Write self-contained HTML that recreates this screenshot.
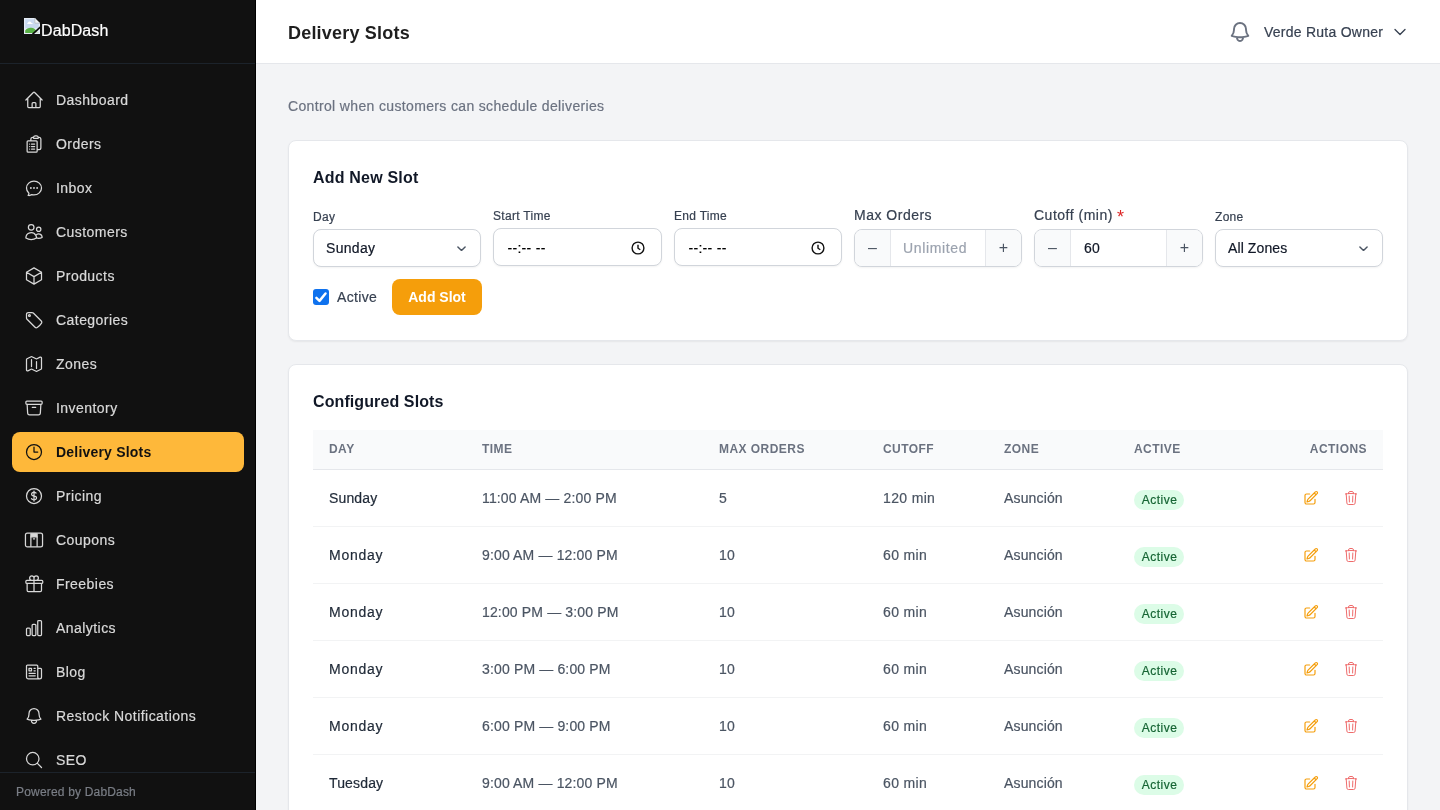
<!DOCTYPE html>
<html><head><meta charset="utf-8">
<style>
*{box-sizing:border-box;margin:0;padding:0}
.rg{-webkit-text-stroke:0.2px currentColor}
html,body{width:1440px;height:810px;overflow:hidden;font-family:"Liberation Sans",sans-serif;background:#f3f4f6}
svg{display:block}
.item span,.lbl,.inp .v,.step .val,.td,.sub,#hd .user,.cbl,.badge,.foot,.lt{-webkit-text-stroke:0.2px currentColor}
.item.act span{-webkit-text-stroke:0}
#sb,#hd,#main{will-change:transform}
#sb{position:absolute;left:0;top:0;width:256px;height:810px;background:#111111;border-right:1px solid #000}
#sb .logo{position:absolute;left:0;top:0;width:255px;height:64px;border-bottom:1px solid #1c232b}
.bimg{position:absolute;left:24px;top:18px;width:16px;height:16px}
.logo .lt{position:absolute;left:41px;top:21px;font-size:16px;line-height:20px;color:#fff;letter-spacing:0.1px}
#sb .nav{position:absolute;left:0;top:64px;width:255px;height:708px;overflow:hidden}
.item{position:absolute;left:12px;width:232px;height:40px;border-radius:8px;color:#d9d9d9;font-size:14px}
.item svg{position:absolute;left:12px;top:10px;width:20px;height:20px}
.item span{position:absolute;left:44px;top:0;line-height:40px;white-space:nowrap;letter-spacing:0.45px}
.item.act{background:#feb83a;color:#111;font-weight:bold}
.item.act span{letter-spacing:0.2px}
#sb .foot{position:absolute;left:0;top:772px;width:255px;height:38px;border-top:1px solid #1c232b;color:#7a7e86;font-size:12px;padding-left:16px;line-height:39px;letter-spacing:0.18px}
#hd{position:absolute;left:256px;top:0;width:1184px;height:64px;background:#fff;border-bottom:1px solid #e5e7eb}
#hd h1{position:absolute;left:32px;top:22px;font-size:18px;line-height:22px;font-weight:bold;color:#1f1f1f;letter-spacing:0.2px}
#hd .bell{position:absolute;left:972px;top:20px;width:24px;height:24px;color:#6b7280}
#hd .user{position:absolute;left:1008px;top:22px;font-size:14px;line-height:20px;color:#374151;letter-spacing:0.25px}
#hd .chev{position:absolute;left:1136px;top:24px;width:16px;height:16px;color:#374151}
#main{position:absolute;left:256px;top:64px;width:1184px;height:746px;overflow:hidden}
.sub{position:absolute;left:32px;top:32px;font-size:14px;line-height:20px;color:#6b7280;letter-spacing:0.35px}
.card{position:absolute;left:32px;width:1120px;background:#fff;border:1px solid #e5e7eb;border-radius:8px;box-shadow:0 1px 2px rgba(0,0,0,0.06)}
.card h2{position:absolute;left:24px;font-size:16px;line-height:20px;font-weight:bold;color:#111827;letter-spacing:0.1px}
.fld{position:absolute;top:0}
.lbl{position:absolute;font-size:12px;line-height:16px;color:#374151;white-space:nowrap;letter-spacing:0.3px}
.lbl.big{font-size:14px;line-height:20px;letter-spacing:0.5px}
.inp{position:absolute;height:38px;border:1px solid #d1d5db;border-radius:8px;background:#fff;box-shadow:0 1px 2px rgba(0,0,0,0.05);font-size:14px;color:#111827}
.inp .v{position:absolute;left:13px;top:0;line-height:36px;letter-spacing:0.3px}
.inp svg.ch{position:absolute;right:12px;top:11px;width:16px;height:16px;color:#4b5563}
.sch{position:absolute;right:14px;top:15.5px;width:9px;height:5.4px}
.clk{position:absolute;right:16px;top:12px;width:14px;height:14px}
.step{position:absolute;height:38px;border:1px solid #d1d5db;border-radius:8px;background:#fff;box-shadow:0 1px 2px rgba(0,0,0,0.05);overflow:hidden}
.step .b{position:absolute;top:0;width:36px;height:36px;background:#f9fafb;color:#4b5563;font-size:16px;line-height:36px;text-align:center}
.step .b.l{left:0;border-right:1px solid #e5e7eb}
.step .b.r{right:0;border-left:1px solid #e5e7eb}
.step .val{position:absolute;top:0;line-height:36px;font-size:14px;letter-spacing:0.3px}
.cb{position:absolute;left:24px;top:148px;width:16px;height:16px;background:#0f72ee;border-radius:3px}
.cbl{position:absolute;left:48px;top:146px;font-size:14px;line-height:20px;color:#374151;letter-spacing:0.35px}
.btn{position:absolute;left:103px;top:138px;width:90px;height:36px;background:#f59e0b;border-radius:8px;color:#fff;font-weight:bold;font-size:14px;line-height:36px;text-align:center;letter-spacing:0px}
.thd{position:absolute;left:24px;top:65px;width:1070px;height:40px;background:#f9fafb;border-bottom:1px solid #e5e7eb}
.th{position:absolute;top:0;line-height:39px;font-size:12px;font-weight:bold;color:#6b7280;letter-spacing:0.45px}
.tr{position:absolute;left:24px;width:1070px;height:57px;border-bottom:1px solid #f2f3f4}
.td{position:absolute;top:0;line-height:56px;font-size:14px;white-space:nowrap;letter-spacing:0.3px}
.td.day{color:#1f2937;letter-spacing:0.15px}
.td.tm{color:#4b5563;letter-spacing:0.15px}
.badge{position:absolute;top:20px;width:50px;height:20px;border-radius:10px;background:#dcfce7;color:#166534;font-size:12px;line-height:20px;text-align:center;letter-spacing:0.5px;padding-left:1px}
.act-ed{position:absolute;left:990px;top:20px;width:16px;height:16px;color:#f59e0b}
.act-tr{position:absolute;left:1030px;top:20px;width:16px;height:16px;color:#ef6b6b}
</style></head><body>
<div id="sb">
  <div class="logo">
    <svg class="bimg" viewBox="0 0 16 16"><path d="M0 0h10.8L16 5.2V16H0z" fill="#e6edf6"/><path d="M1.2 1.2h8.8v4.4h4.8v4.6H1.2z" fill="#c9d9f0"/><path d="M3.2 5.6c.6-1.6 1.6-2.2 2.4-2.2.9 0 1.6.7 2 1.6.8 0 1.2.3 1.2.9H3.2z" fill="#fff"/><path d="M1.2 15V12.6c1.4-2.2 3.6-3 6-2.8 2.2.2 3.8 1.2 5 2.6L9.4 15z" fill="#58b045"/><path d="M12.2 12.4L15 15H9.4z" fill="#cfe3c4"/><path d="M10.8 0v5.2H16" fill="#f4f6f8" stroke="#aab4be" stroke-width="0.8"/><path d="M8.6 16.2L16.4 9" stroke="#0a0a0a" stroke-width="1.7"/></svg>
    <div class="lt">DabDash</div>
  </div>
  <div class="nav">
<div class="item" style="top:16px"><svg class="" viewBox="0 0 24 24" fill="none" stroke="currentColor" stroke-width="1.5" stroke-linecap="round" stroke-linejoin="round"><path d="m2.25 12 8.954-8.955c.44-.439 1.152-.439 1.591 0L21.75 12M4.5 9.75v10.125c0 .621.504 1.125 1.125 1.125H9.75v-4.875c0-.621.504-1.125 1.125-1.125h2.25c.621 0 1.125.504 1.125 1.125V21h4.125c.621 0 1.125-.504 1.125-1.125V9.75M8.25 21h8.25"/></svg><span>Dashboard</span></div>
<div class="item" style="top:60px"><svg class="" viewBox="0 0 24 24" fill="none" stroke="currentColor" stroke-width="1.5" stroke-linecap="round" stroke-linejoin="round"><path d="M9 12h3.75M9 15h3.75M9 18h3.75m3 .75H18a2.25 2.25 0 0 0 2.25-2.25V6.108c0-1.135-.845-2.098-1.976-2.192a48.424 48.424 0 0 0-1.123-.08m-5.801 0c-.065.21-.1.433-.1.664 0 .414.336.75.75.75h4.5a.75.75 0 0 0 .75-.75 2.25 2.25 0 0 0-.1-.664m-5.8 0A2.251 2.251 0 0 1 13.5 2.25H15c1.012 0 1.867.668 2.150 1.586m-5.8 0c-.376.023-.75.05-1.124.08C9.095 4.010 8.250 4.973 8.250 6.108V8.25m0 0H4.875c-.621 0-1.125.504-1.125 1.125v11.25c0 .621.504 1.125 1.125 1.125h9.75c.621 0 1.125-.504 1.125-1.125V9.375c0-.621-.504-1.125-1.125-1.125H8.25ZM6.75 12h.008v.008H6.75V12Zm0 3h.008v.008H6.75V15Zm0 3h.008v.008H6.75V18Z"/></svg><span>Orders</span></div>
<div class="item" style="top:104px"><svg class="" viewBox="0 0 24 24" fill="none" stroke="currentColor" stroke-width="1.5" stroke-linecap="round" stroke-linejoin="round"><path d="M8.625 12a.375.375 0 1 1-.75 0 .375.375 0 0 1 .75 0Zm0 0H8.25m4.125 0a.375.375 0 1 1-.75 0 .375.375 0 0 1 .75 0Zm0 0H12m4.125 0a.375.375 0 1 1-.75 0 .375.375 0 0 1 .75 0Zm0 0h-.375M21 12c0 4.556-4.03 8.25-9 8.25a9.764 9.764 0 0 1-2.555-.337A5.972 5.972 0 0 1 5.41 20.97a5.969 5.969 0 0 1-.474-.065 4.48 4.48 0 0 0 .978-2.025c.09-.457-.133-.901-.467-1.226C3.93 16.178 3 14.189 3 12c0-4.556 4.03-8.25 9-8.25s9 3.694 9 8.25Z"/></svg><span>Inbox</span></div>
<div class="item" style="top:148px"><svg class="" viewBox="0 0 24 24" fill="none" stroke="currentColor" stroke-width="1.5" stroke-linecap="round" stroke-linejoin="round"><path d="M15 19.128a9.38 9.38 0 0 0 2.625.372 9.337 9.337 0 0 0 4.121-.952 4.125 4.125 0 0 0-7.533-2.493M15 19.128v-.003c0-1.113-.285-2.16-.786-3.07M15 19.128v.106A12.318 12.318 0 0 1 8.624 21c-2.331 0-4.512-.645-6.374-1.766l-.001-.109a6.375 6.375 0 0 1 11.964-3.07M12 6.375a3.375 3.375 0 1 1-6.75 0 3.375 3.375 0 0 1 6.75 0Zm8.25 2.25a2.625 2.625 0 1 1-5.25 0 2.625 2.625 0 0 1 5.25 0Z"/></svg><span>Customers</span></div>
<div class="item" style="top:192px"><svg class="" viewBox="0 0 24 24" fill="none" stroke="currentColor" stroke-width="1.5" stroke-linecap="round" stroke-linejoin="round"><path d="m21 7.5-9-5.25L3 7.5m18 0-9 5.25m9-5.25v9l-9 5.25M3 7.5l9 5.25M3 7.5v9l9 5.25m0-9v9"/></svg><span>Products</span></div>
<div class="item" style="top:236px"><svg class="" viewBox="0 0 24 24" fill="none" stroke="currentColor" stroke-width="1.5" stroke-linecap="round" stroke-linejoin="round"><path d="M9.568 3H5.25A2.25 2.25 0 0 0 3 5.25v4.318c0 .597.237 1.17.659 1.591l9.581 9.581c.699.699 1.78.872 2.607.33a18.095 18.095 0 0 0 5.223-5.223c.542-.827.369-1.908-.33-2.607L11.16 3.66A2.25 2.25 0 0 0 9.568 3Z"/><circle cx="6.5" cy="6.5" r="1.1"/></svg><span>Categories</span></div>
<div class="item" style="top:280px"><svg class="" viewBox="0 0 24 24" fill="none" stroke="currentColor" stroke-width="1.5" stroke-linecap="round" stroke-linejoin="round"><path d="M9 6.75V15m6-6v8.25m.503 3.498 4.875-2.437c.381-.19.622-.58.622-1.006V4.82c0-.836-.88-1.38-1.628-1.006l-3.869 1.934c-.317.159-.69.159-1.006 0L9.503 3.252a1.125 1.125 0 0 0-1.006 0L3.622 5.689C3.24 5.88 3 6.27 3 6.695V19.18c0 .836.88 1.38 1.628 1.006l3.869-1.934c.317-.159.69-.159 1.006 0l4.994 2.497c.317.158.69.158 1.006 0Z"/></svg><span>Zones</span></div>
<div class="item" style="top:324px"><svg class="" viewBox="0 0 24 24" fill="none" stroke="currentColor" stroke-width="1.5" stroke-linecap="round" stroke-linejoin="round"><path d="m20.25 7.5-.625 10.632a2.25 2.25 0 0 1-2.247 2.118H6.622a2.25 2.25 0 0 1-2.247-2.118L3.75 7.5M10 11.25h4M3.375 7.5h17.25c.621 0 1.125-.504 1.125-1.125v-1.5c0-.621-.504-1.125-1.125-1.125H3.375c-.621 0-1.125.504-1.125 1.125v1.5c0 .621.504 1.125 1.125 1.125Z"/></svg><span>Inventory</span></div>
<div class="item act" style="top:368px"><svg class="" viewBox="0 0 24 24" fill="none" stroke="currentColor" stroke-width="1.5" stroke-linecap="round" stroke-linejoin="round"><path d="M12 6v6h4.5m4.5 0a9 9 0 1 1-18 0 9 9 0 0 1 18 0Z"/></svg><span>Delivery Slots</span></div>
<div class="item" style="top:412px"><svg class="" viewBox="0 0 24 24" fill="none" stroke="currentColor" stroke-width="1.5" stroke-linecap="round" stroke-linejoin="round"><path d="M12 6v12m-3-2.818.879.659c1.171.879 3.07.879 4.242 0 1.172-.879 1.172-2.303 0-3.182C13.536 12.219 12.768 12 12 12c-.725 0-1.45-.22-2.003-.659-1.106-.879-1.106-2.303 0-3.182s2.9-.879 4.006 0l.415.33M21 12a9 9 0 1 1-18 0 9 9 0 0 1 18 0Z"/></svg><span>Pricing</span></div>
<div class="item" style="top:456px"><svg class="" viewBox="0 0 24 24" fill="none" stroke="currentColor" stroke-width="1.5" stroke-linecap="round" stroke-linejoin="round"><rect x="1.75" y="3.75" width="20.5" height="16.5" rx="2.25"/><path d="M8.25 4.5h7.5v3.75h-7.5z" fill="currentColor"/><path d="M8.25 8.25v11.25M15.75 8.25v11.25M11.25 10.5h1.5"/></svg><span>Coupons</span></div>
<div class="item" style="top:500px"><svg class="" viewBox="0 0 24 24" fill="none" stroke="currentColor" stroke-width="1.5" stroke-linecap="round" stroke-linejoin="round"><path d="M21 11.25v8.25a1.5 1.5 0 0 1-1.5 1.5H5.25a1.5 1.5 0 0 1-1.5-1.5v-8.25M12 4.875A2.625 2.625 0 1 0 9.375 7.5H12m0-2.625V7.5m0-2.625A2.625 2.625 0 1 1 14.625 7.5H12m0 0V21m-8.625-9.75h18c.621 0 1.125-.504 1.125-1.125v-1.5c0-.621-.504-1.125-1.125-1.125h-18c-.621 0-1.125.504-1.125 1.125v1.5c0 .621.504 1.125 1.125 1.125Z"/></svg><span>Freebies</span></div>
<div class="item" style="top:544px"><svg class="" viewBox="0 0 24 24" fill="none" stroke="currentColor" stroke-width="1.5" stroke-linecap="round" stroke-linejoin="round"><path d="M3 13.125C3 12.504 3.504 12 4.125 12h2.25c.621 0 1.125.504 1.125 1.125v6.75C7.5 20.496 6.996 21 6.375 21h-2.25A1.125 1.125 0 0 1 3 19.875v-6.75ZM9.75 8.625c0-.621.504-1.125 1.125-1.125h2.25c.621 0 1.125.504 1.125 1.125v11.25c0 .621-.504 1.125-1.125 1.125h-2.25a1.125 1.125 0 0 1-1.125-1.125V8.625ZM16.5 4.125c0-.621.504-1.125 1.125-1.125h2.25C20.496 3 21 3.504 21 4.125v15.75c0 .621-.504 1.125-1.125 1.125h-2.25a1.125 1.125 0 0 1-1.125-1.125V4.125Z"/></svg><span>Analytics</span></div>
<div class="item" style="top:588px"><svg class="" viewBox="0 0 24 24" fill="none" stroke="currentColor" stroke-width="1.5" stroke-linecap="round" stroke-linejoin="round"><path d="M12 7.5h1.5m-1.5 3h1.5m-7.5 3h7.5m-7.5 3h7.5m3-9h3.375c.621 0 1.125.504 1.125 1.125V18a2.25 2.25 0 0 1-2.25 2.25M16.5 7.5V18a2.25 2.25 0 0 0 2.25 2.25M16.5 7.5V4.875c0-.621-.504-1.125-1.125-1.125H4.125C3.504 3.75 3 4.254 3 4.875V18a2.25 2.25 0 0 0 2.25 2.25h13.5M6 7.5h3v3H6v-3Z"/></svg><span>Blog</span></div>
<div class="item" style="top:632px"><svg class="" viewBox="0 0 24 24" fill="none" stroke="currentColor" stroke-width="1.5" stroke-linecap="round" stroke-linejoin="round"><path d="M14.857 17.082a23.848 23.848 0 0 0 5.454-1.31A8.967 8.967 0 0 1 18 9.75V9A6 6 0 0 0 6 9v.75a8.967 8.967 0 0 1-2.312 6.022c1.733.64 3.56 1.085 5.455 1.31m5.714 0a24.255 24.255 0 0 1-5.714 0m5.714 0a3 3 0 1 1-5.714 0"/></svg><span>Restock Notifications</span></div>
<div class="item" style="top:676px"><svg class="" viewBox="0 0 24 24" fill="none" stroke="currentColor" stroke-width="1.5" stroke-linecap="round" stroke-linejoin="round"><path d="m21 21-5.197-5.197m0 0A7.5 7.5 0 1 0 5.196 5.196a7.5 7.5 0 0 0 10.607 10.607Z"/></svg><span>SEO</span></div>

  </div>
  <div class="foot">Powered by DabDash</div>
</div>
<div id="hd">
  <h1>Delivery Slots</h1>
  <svg class="bell" viewBox="0 0 24 24" fill="none" stroke="currentColor" stroke-width="1.9" stroke-linecap="round" stroke-linejoin="round"><path d="M14.857 17.082a23.848 23.848 0 0 0 5.454-1.31A8.967 8.967 0 0 1 18 9.75V9A6 6 0 0 0 6 9v.75a8.967 8.967 0 0 1-2.312 6.022c1.733.64 3.56 1.085 5.455 1.31m5.714 0a24.255 24.255 0 0 1-5.714 0m5.714 0a3 3 0 1 1-5.714 0"/></svg>
  <div class="user">Verde Ruta Owner</div>
  <svg class="chev" viewBox="0 0 24 24" fill="none" stroke="currentColor" stroke-width="2" stroke-linecap="round" stroke-linejoin="round"><path d="m19.5 8.25-7.5 7.5-7.5-7.5"/></svg>
</div>
<div id="main">
  <div class="sub">Control when customers can schedule deliveries</div>
  <div class="card" style="top:76px;height:201px">
    <h2 style="top:27px;letter-spacing:0.2px">Add New Slot</h2>
    <div class="lbl" style="left:24px;top:68px">Day</div>
    <div class="inp" style="left:24px;top:88px;width:168px"><span class="v" style="left:12px">Sunday</span><svg class="sch" viewBox="0 0 10 6" fill="none" stroke="#4b5563" stroke-width="1.6" stroke-linecap="round" stroke-linejoin="round"><path d="M1 1l4 4 4-4"/></svg></div>
    <div class="lbl" style="left:204px;top:67px">Start Time</div>
    <div class="inp" style="left:204px;top:87px;width:169px"><span class="v" style="left:13.5px;top:1px;letter-spacing:0.3px;color:#000">--:-- --</span><svg class="clk" viewBox="0 0 14 14" fill="none" stroke="#111" stroke-width="1.4"><circle cx="7" cy="7" r="5.9"/><path d="M7 3.8V7.2l2.3 1.6"/></svg></div>
    <div class="lbl" style="left:385px;top:67px">End Time</div>
    <div class="inp" style="left:385px;top:87px;width:168px"><span class="v" style="left:13.5px;top:1px;letter-spacing:0.3px;color:#000">--:-- --</span><svg class="clk" viewBox="0 0 14 14" fill="none" stroke="#111" stroke-width="1.4"><circle cx="7" cy="7" r="5.9"/><path d="M7 3.8V7.2l2.3 1.6"/></svg></div>
    <div class="lbl big" style="left:565px;top:64px">Max Orders</div>
    <div class="step" style="left:565px;top:88px;width:168px"><div class="b l">&#8211;</div><div class="val" style="left:48px;color:#9ca3af;letter-spacing:0.65px">Unlimited</div><div class="b r">+</div></div>
    <div class="lbl big" style="left:745px;top:64px">Cutoff (min) <span style="color:#dc2626;font-size:18px;position:absolute;left:83px;top:2px;line-height:20px;-webkit-text-stroke:0">*</span></div>
    <div class="step" style="left:745px;top:88px;width:169px"><div class="b l">&#8211;</div><div class="val" style="left:49px;color:#111827">60</div><div class="b r">+</div></div>
    <div class="lbl" style="left:926px;top:68px">Zone</div>
    <div class="inp" style="left:926px;top:88px;width:168px"><span class="v" style="left:12px;letter-spacing:0.1px">All Zones</span><svg class="sch" viewBox="0 0 10 6" fill="none" stroke="#4b5563" stroke-width="1.6" stroke-linecap="round" stroke-linejoin="round"><path d="M1 1l4 4 4-4"/></svg></div>
    <div class="cb"><svg viewBox="0 0 16 16" width="16" height="16"><path d="M3.4 8.8l3.1 3.1 6-7.4" fill="none" stroke="#fff" stroke-width="2.5" stroke-linecap="round" stroke-linejoin="round"/></svg></div>
    <div class="cbl">Active</div>
    <div class="btn">Add Slot</div>
  </div>
  <div class="card" style="top:300px;height:600px">
    <h2 style="top:27px">Configured Slots</h2>
    <div class="thd">
      <div class="th" style="left:16px">DAY</div>
      <div class="th" style="left:169px">TIME</div>
      <div class="th" style="left:406px">MAX ORDERS</div>
      <div class="th" style="left:570px">CUTOFF</div>
      <div class="th" style="left:691px">ZONE</div>
      <div class="th" style="left:821px">ACTIVE</div>
      <div class="th" style="right:16px">ACTIONS</div>
    </div>
<div class="tr" style="top:105px">
<div class="td day" style="left:16px">Sunday</div>
<div class="td tm" style="left:169px">11:00 AM — 2:00 PM</div>
<div class="td tm" style="left:406px">5</div>
<div class="td tm" style="left:570px;letter-spacing:0.35px">120 min</div>
<div class="td tm" style="left:691px">Asunción</div>
<div class="badge" style="left:821px">Active</div>
<div class="act-ed"><svg class="" viewBox="0 0 24 24" fill="none" stroke="currentColor" stroke-width="1.8" stroke-linecap="round" stroke-linejoin="round"><path d="m16.862 4.487 1.687-1.688a1.875 1.875 0 1 1 2.652 2.652L10.582 16.07a4.5 4.5 0 0 1-1.897 1.13L6 18l.8-2.685a4.5 4.5 0 0 1 1.13-1.897l8.932-8.931Zm0 0L19.5 7.125M18 14v4.75A2.25 2.25 0 0 1 15.75 21H5.25A2.25 2.25 0 0 1 3 18.75V8.25A2.25 2.25 0 0 1 5.25 6H10"/></svg></div><div class="act-tr"><svg class="" viewBox="0 0 24 24" fill="none" stroke="currentColor" stroke-width="1.5" stroke-linecap="round" stroke-linejoin="round"><path d="m14.74 9-.346 9m-4.788 0L9.26 9m9.968-3.21c.342.052.682.107 1.022.166m-1.022-.165L18.16 19.673a2.25 2.25 0 0 1-2.244 2.077H8.084a2.25 2.25 0 0 1-2.244-2.077L4.772 5.79m14.456 0a48.108 48.108 0 0 0-3.478-.397m-12 .562c.34-.059.68-.114 1.022-.165m0 0a48.11 48.11 0 0 1 3.478-.397m7.5 0v-.916c0-1.18-.91-2.164-2.09-2.201a51.964 51.964 0 0 0-3.32 0c-1.18.037-2.09 1.022-2.09 2.201v.916m7.5 0a48.667 48.667 0 0 0-7.5 0"/></svg></div>
</div>
<div class="tr" style="top:162px">
<div class="td day" style="left:16px;letter-spacing:0.75px">Monday</div>
<div class="td tm" style="left:169px">9:00 AM — 12:00 PM</div>
<div class="td tm" style="left:406px">10</div>
<div class="td tm" style="left:570px;letter-spacing:0.35px">60 min</div>
<div class="td tm" style="left:691px">Asunción</div>
<div class="badge" style="left:821px">Active</div>
<div class="act-ed"><svg class="" viewBox="0 0 24 24" fill="none" stroke="currentColor" stroke-width="1.8" stroke-linecap="round" stroke-linejoin="round"><path d="m16.862 4.487 1.687-1.688a1.875 1.875 0 1 1 2.652 2.652L10.582 16.07a4.5 4.5 0 0 1-1.897 1.13L6 18l.8-2.685a4.5 4.5 0 0 1 1.13-1.897l8.932-8.931Zm0 0L19.5 7.125M18 14v4.75A2.25 2.25 0 0 1 15.75 21H5.25A2.25 2.25 0 0 1 3 18.75V8.25A2.25 2.25 0 0 1 5.25 6H10"/></svg></div><div class="act-tr"><svg class="" viewBox="0 0 24 24" fill="none" stroke="currentColor" stroke-width="1.5" stroke-linecap="round" stroke-linejoin="round"><path d="m14.74 9-.346 9m-4.788 0L9.26 9m9.968-3.21c.342.052.682.107 1.022.166m-1.022-.165L18.16 19.673a2.25 2.25 0 0 1-2.244 2.077H8.084a2.25 2.25 0 0 1-2.244-2.077L4.772 5.79m14.456 0a48.108 48.108 0 0 0-3.478-.397m-12 .562c.34-.059.68-.114 1.022-.165m0 0a48.11 48.11 0 0 1 3.478-.397m7.5 0v-.916c0-1.18-.91-2.164-2.09-2.201a51.964 51.964 0 0 0-3.32 0c-1.18.037-2.09 1.022-2.09 2.201v.916m7.5 0a48.667 48.667 0 0 0-7.5 0"/></svg></div>
</div>
<div class="tr" style="top:219px">
<div class="td day" style="left:16px;letter-spacing:0.75px">Monday</div>
<div class="td tm" style="left:169px">12:00 PM — 3:00 PM</div>
<div class="td tm" style="left:406px">10</div>
<div class="td tm" style="left:570px;letter-spacing:0.35px">60 min</div>
<div class="td tm" style="left:691px">Asunción</div>
<div class="badge" style="left:821px">Active</div>
<div class="act-ed"><svg class="" viewBox="0 0 24 24" fill="none" stroke="currentColor" stroke-width="1.8" stroke-linecap="round" stroke-linejoin="round"><path d="m16.862 4.487 1.687-1.688a1.875 1.875 0 1 1 2.652 2.652L10.582 16.07a4.5 4.5 0 0 1-1.897 1.13L6 18l.8-2.685a4.5 4.5 0 0 1 1.13-1.897l8.932-8.931Zm0 0L19.5 7.125M18 14v4.75A2.25 2.25 0 0 1 15.75 21H5.25A2.25 2.25 0 0 1 3 18.75V8.25A2.25 2.25 0 0 1 5.25 6H10"/></svg></div><div class="act-tr"><svg class="" viewBox="0 0 24 24" fill="none" stroke="currentColor" stroke-width="1.5" stroke-linecap="round" stroke-linejoin="round"><path d="m14.74 9-.346 9m-4.788 0L9.26 9m9.968-3.21c.342.052.682.107 1.022.166m-1.022-.165L18.16 19.673a2.25 2.25 0 0 1-2.244 2.077H8.084a2.25 2.25 0 0 1-2.244-2.077L4.772 5.79m14.456 0a48.108 48.108 0 0 0-3.478-.397m-12 .562c.34-.059.68-.114 1.022-.165m0 0a48.11 48.11 0 0 1 3.478-.397m7.5 0v-.916c0-1.18-.91-2.164-2.09-2.201a51.964 51.964 0 0 0-3.32 0c-1.18.037-2.09 1.022-2.09 2.201v.916m7.5 0a48.667 48.667 0 0 0-7.5 0"/></svg></div>
</div>
<div class="tr" style="top:276px">
<div class="td day" style="left:16px;letter-spacing:0.75px">Monday</div>
<div class="td tm" style="left:169px">3:00 PM — 6:00 PM</div>
<div class="td tm" style="left:406px">10</div>
<div class="td tm" style="left:570px;letter-spacing:0.35px">60 min</div>
<div class="td tm" style="left:691px">Asunción</div>
<div class="badge" style="left:821px">Active</div>
<div class="act-ed"><svg class="" viewBox="0 0 24 24" fill="none" stroke="currentColor" stroke-width="1.8" stroke-linecap="round" stroke-linejoin="round"><path d="m16.862 4.487 1.687-1.688a1.875 1.875 0 1 1 2.652 2.652L10.582 16.07a4.5 4.5 0 0 1-1.897 1.13L6 18l.8-2.685a4.5 4.5 0 0 1 1.13-1.897l8.932-8.931Zm0 0L19.5 7.125M18 14v4.75A2.25 2.25 0 0 1 15.75 21H5.25A2.25 2.25 0 0 1 3 18.75V8.25A2.25 2.25 0 0 1 5.25 6H10"/></svg></div><div class="act-tr"><svg class="" viewBox="0 0 24 24" fill="none" stroke="currentColor" stroke-width="1.5" stroke-linecap="round" stroke-linejoin="round"><path d="m14.74 9-.346 9m-4.788 0L9.26 9m9.968-3.21c.342.052.682.107 1.022.166m-1.022-.165L18.16 19.673a2.25 2.25 0 0 1-2.244 2.077H8.084a2.25 2.25 0 0 1-2.244-2.077L4.772 5.79m14.456 0a48.108 48.108 0 0 0-3.478-.397m-12 .562c.34-.059.68-.114 1.022-.165m0 0a48.11 48.11 0 0 1 3.478-.397m7.5 0v-.916c0-1.18-.91-2.164-2.09-2.201a51.964 51.964 0 0 0-3.32 0c-1.18.037-2.09 1.022-2.09 2.201v.916m7.5 0a48.667 48.667 0 0 0-7.5 0"/></svg></div>
</div>
<div class="tr" style="top:333px">
<div class="td day" style="left:16px;letter-spacing:0.75px">Monday</div>
<div class="td tm" style="left:169px">6:00 PM — 9:00 PM</div>
<div class="td tm" style="left:406px">10</div>
<div class="td tm" style="left:570px;letter-spacing:0.35px">60 min</div>
<div class="td tm" style="left:691px">Asunción</div>
<div class="badge" style="left:821px">Active</div>
<div class="act-ed"><svg class="" viewBox="0 0 24 24" fill="none" stroke="currentColor" stroke-width="1.8" stroke-linecap="round" stroke-linejoin="round"><path d="m16.862 4.487 1.687-1.688a1.875 1.875 0 1 1 2.652 2.652L10.582 16.07a4.5 4.5 0 0 1-1.897 1.13L6 18l.8-2.685a4.5 4.5 0 0 1 1.13-1.897l8.932-8.931Zm0 0L19.5 7.125M18 14v4.75A2.25 2.25 0 0 1 15.75 21H5.25A2.25 2.25 0 0 1 3 18.75V8.25A2.25 2.25 0 0 1 5.25 6H10"/></svg></div><div class="act-tr"><svg class="" viewBox="0 0 24 24" fill="none" stroke="currentColor" stroke-width="1.5" stroke-linecap="round" stroke-linejoin="round"><path d="m14.74 9-.346 9m-4.788 0L9.26 9m9.968-3.21c.342.052.682.107 1.022.166m-1.022-.165L18.16 19.673a2.25 2.25 0 0 1-2.244 2.077H8.084a2.25 2.25 0 0 1-2.244-2.077L4.772 5.79m14.456 0a48.108 48.108 0 0 0-3.478-.397m-12 .562c.34-.059.68-.114 1.022-.165m0 0a48.11 48.11 0 0 1 3.478-.397m7.5 0v-.916c0-1.18-.91-2.164-2.09-2.201a51.964 51.964 0 0 0-3.32 0c-1.18.037-2.09 1.022-2.09 2.201v.916m7.5 0a48.667 48.667 0 0 0-7.5 0"/></svg></div>
</div>
<div class="tr" style="top:390px">
<div class="td day" style="left:16px">Tuesday</div>
<div class="td tm" style="left:169px">9:00 AM — 12:00 PM</div>
<div class="td tm" style="left:406px">10</div>
<div class="td tm" style="left:570px;letter-spacing:0.35px">60 min</div>
<div class="td tm" style="left:691px">Asunción</div>
<div class="badge" style="left:821px">Active</div>
<div class="act-ed"><svg class="" viewBox="0 0 24 24" fill="none" stroke="currentColor" stroke-width="1.8" stroke-linecap="round" stroke-linejoin="round"><path d="m16.862 4.487 1.687-1.688a1.875 1.875 0 1 1 2.652 2.652L10.582 16.07a4.5 4.5 0 0 1-1.897 1.13L6 18l.8-2.685a4.5 4.5 0 0 1 1.13-1.897l8.932-8.931Zm0 0L19.5 7.125M18 14v4.75A2.25 2.25 0 0 1 15.75 21H5.25A2.25 2.25 0 0 1 3 18.75V8.25A2.25 2.25 0 0 1 5.25 6H10"/></svg></div><div class="act-tr"><svg class="" viewBox="0 0 24 24" fill="none" stroke="currentColor" stroke-width="1.5" stroke-linecap="round" stroke-linejoin="round"><path d="m14.74 9-.346 9m-4.788 0L9.26 9m9.968-3.21c.342.052.682.107 1.022.166m-1.022-.165L18.16 19.673a2.25 2.25 0 0 1-2.244 2.077H8.084a2.25 2.25 0 0 1-2.244-2.077L4.772 5.79m14.456 0a48.108 48.108 0 0 0-3.478-.397m-12 .562c.34-.059.68-.114 1.022-.165m0 0a48.11 48.11 0 0 1 3.478-.397m7.5 0v-.916c0-1.18-.91-2.164-2.09-2.201a51.964 51.964 0 0 0-3.32 0c-1.18.037-2.09 1.022-2.09 2.201v.916m7.5 0a48.667 48.667 0 0 0-7.5 0"/></svg></div>
</div>
<div class="tr" style="top:447px">
<div class="td day" style="left:16px">Tuesday</div>
<div class="td tm" style="left:169px">12:00 PM — 3:00 PM</div>
<div class="td tm" style="left:406px">10</div>
<div class="td tm" style="left:570px;letter-spacing:0.35px">60 min</div>
<div class="td tm" style="left:691px">Asunción</div>
<div class="badge" style="left:821px">Active</div>
<div class="act-ed"><svg class="" viewBox="0 0 24 24" fill="none" stroke="currentColor" stroke-width="1.8" stroke-linecap="round" stroke-linejoin="round"><path d="m16.862 4.487 1.687-1.688a1.875 1.875 0 1 1 2.652 2.652L10.582 16.07a4.5 4.5 0 0 1-1.897 1.13L6 18l.8-2.685a4.5 4.5 0 0 1 1.13-1.897l8.932-8.931Zm0 0L19.5 7.125M18 14v4.75A2.25 2.25 0 0 1 15.75 21H5.25A2.25 2.25 0 0 1 3 18.75V8.25A2.25 2.25 0 0 1 5.25 6H10"/></svg></div><div class="act-tr"><svg class="" viewBox="0 0 24 24" fill="none" stroke="currentColor" stroke-width="1.5" stroke-linecap="round" stroke-linejoin="round"><path d="m14.74 9-.346 9m-4.788 0L9.26 9m9.968-3.21c.342.052.682.107 1.022.166m-1.022-.165L18.16 19.673a2.25 2.25 0 0 1-2.244 2.077H8.084a2.25 2.25 0 0 1-2.244-2.077L4.772 5.79m14.456 0a48.108 48.108 0 0 0-3.478-.397m-12 .562c.34-.059.68-.114 1.022-.165m0 0a48.11 48.11 0 0 1 3.478-.397m7.5 0v-.916c0-1.18-.91-2.164-2.09-2.201a51.964 51.964 0 0 0-3.32 0c-1.18.037-2.09 1.022-2.09 2.201v.916m7.5 0a48.667 48.667 0 0 0-7.5 0"/></svg></div>
</div>

  </div>
</div>
</body></html>
